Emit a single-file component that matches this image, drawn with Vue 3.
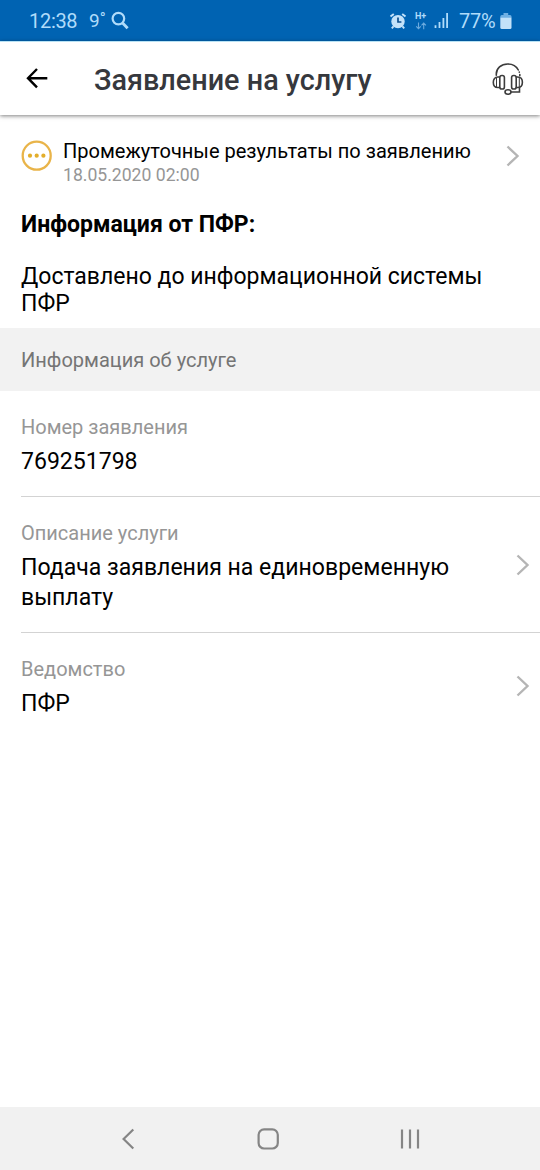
<script setup>
const details = [
  { label: 'Номер заявления', value: '769251798', kind: 'number', link: false },
  { label: 'Описание услуги', value: 'Подача заявления на единовременную выплату', kind: 'service', link: true },
  { label: 'Ведомство', value: 'ПФР', kind: 'agency', link: true },
]
</script>

<template>
  <div class="screen">
    <div class="status">
      <span class="clock">12:38</span>
      <span class="temp">9<span class="deg">°</span></span>
      <svg class="search" width="20" height="20" viewBox="0 0 20 20" fill="none" stroke="#b0dcfa">
        <circle cx="7.4" cy="7.600" r="5.800" stroke-width="2.200" />
        <path d="M11.600 12l5 5.300" stroke-width="2.800" />
      </svg>
      <div class="right">
        <svg width="18" height="18" viewBox="0 0 18 18">
          <circle cx="9" cy="9.600" r="6.700" fill="#c3e2f9" />
          <path d="M1.500 4.600L4.800 1.900M16.500 4.600l-3.300-2.700M4.500 14.300L2.800 16.300M13.500 14.300l1.700 2" stroke="#c3e2f9" stroke-width="1.900" fill="none" />
          <path d="M9 5.600V10h3.400" stroke="#0c4f8f" stroke-width="1.700" fill="none" />
        </svg>
        <div class="net">
          <span>H+</span>
          <svg width="12" height="8" viewBox="0 0 12 8" fill="none" stroke="#6aaade" stroke-width="1.100">
            <path d="M3.500 .5v6M1.200 4.400l2.300 2.300 2.300-2.300M8.700 7.200v-6M6.500 3.300l2.200-2.300 2.200 2.300" />
          </svg>
        </div>
        <svg class="signal" width="15" height="16" viewBox="0 0 15 16">
          <path d="M.6 12.300h1.800V15H.6zM4.600 9h1.800v6H4.600zM8.500 5h1.800v10H8.500zM12.200 0H14v15h-1.800z" fill="#b0dcfa" />
        </svg>
        <span class="percent">77%</span>
        <svg class="battery" width="12" height="17" viewBox="0 0 12 17">
          <path d="M3.500 0h4.700v2h1.800q1.500 0 1.500 1.500V5H.3V3.500Q.3 2 1.800 2h1.700z" fill="#6fb0e4" />
          <path d="M.3 4.800h11.200v9.700q0 1.500-1.500 1.500H1.800q-1.500 0-1.500-1.500z" fill="#c3e2f9" />
        </svg>
      </div>
    </div>

    <header class="header">
      <svg class="back" width="24" height="24" viewBox="0 0 24 24" fill="none" stroke="#000" stroke-width="2.400">
        <path d="M22.300 12.200H3.500M12 3L3 12.200l9 9.200" />
      </svg>
      <h1>Заявление на услугу</h1>
      <svg class="support" width="34" height="34" viewBox="0 0 34 34" fill="none" stroke="#3c3c3c" stroke-width="1.600" stroke-linecap="round">
        <path d="M5.300 13.200V12C5.300 6.500 10 2 16.800 2c5.200 0 8.700 2.300 10.500 6" />
        <path d="M28.300 10v.2M28.800 12.500v1.200" />
        <rect x="8.800" y="13.500" width="4.600" height="13.500" rx="2.100" />
        <rect x="20.600" y="13.500" width="4.600" height="13.500" rx="2.100" />
        <path d="M8.500 15H6.800C4 15 2.300 17 2.300 20.200S4 25.500 6.800 25.500H8.500M25.300 15h1.300c2.900 0 4.800 2 4.800 5.200S29.500 25.500 26.600 25.500h-1.300" />
        <path d="M5.500 15.700v9.500M28.300 15.700v9.500" stroke-width="1" />
        <path d="M28.500 25.800v4.200h-8.300" />
        <ellipse cx="17" cy="30" rx="3" ry="2.200" />
      </svg>
    </header>

    <main>
      <div class="result">
        <svg class="pending" width="32" height="32" viewBox="0 0 32 32">
          <circle cx="15.700" cy="15.700" r="14" fill="none" stroke="#e9b449" stroke-width="2.300" />
          <g fill="#e3ae2b"><circle cx="9" cy="15.700" r="2.100" /><circle cx="15.700" cy="15.700" r="2.100" /><circle cx="22.400" cy="15.700" r="2.100" /></g>
        </svg>
        <div class="result-text">
          <div class="result-title">Промежуточные результаты по заявлению</div>
          <div class="result-date">18.05.2020 02:00</div>
        </div>
        <svg class="chevron" width="14" height="22" viewBox="0 0 14 22" fill="none" stroke="#b5b5b5" stroke-width="2.400">
          <path d="M1.500 1.500L11.500 11l-10 9.500" />
        </svg>
      </div>
      <h2>Информация от ПФР:</h2>
      <p class="message">Доставлено до информационной системы ПФР</p>
      <div class="section">Информация об услуге</div>
      <div v-for="item in details" :key="item.label" class="detail" :class="item.kind">
        <div class="detail-text">
          <div class="label">{{ item.label }}</div>
          <div class="value">{{ item.value }}</div>
        </div>
        <svg v-if="item.link" class="chevron" width="14" height="22" viewBox="0 0 14 22" fill="none" stroke="#b5b5b5" stroke-width="2.400">
          <path d="M1.500 1.500L11.500 11l-10 9.500" />
        </svg>
      </div>
    </main>

    <nav class="nav">
      <svg width="14" height="22" viewBox="0 0 14 22" fill="none" stroke="#858585" stroke-width="2.200"><path d="M12.300 1.500L2.600 11l9.700 9.500" /></svg>
      <svg width="22" height="22" viewBox="0 0 22 22" fill="none" stroke="#858585" stroke-width="2.200"><rect x="1.600" y="1.300" width="19.200" height="19.200" rx="5.500" /></svg>
      <svg width="20" height="22" viewBox="0 0 20 22" fill="none" stroke="#858585" stroke-width="2.200"><path d="M2 1.500v19M10 1.500v19M18 1.500v19" /></svg>
    </nav>
  </div>
</template>

<style>
body { margin: 0; background: #fff; }
</style>

<style scoped>
.screen { width: 540px; height: 1170px; display: flex; flex-direction: column; background: #fff; font-family: Roboto, "Noto Sans", sans-serif; color: #000; overflow: hidden; }
.screen svg { flex: none; display: block; }
.status { height: 41px; box-sizing: border-box; flex: none; display: flex; align-items: center; padding: 2px 28px 0 29px; background: #0063b2; color: #b0dcfa; font-size: 20px; line-height: 24px; }
.clock { width: 60px; margin-top: -1px; letter-spacing: -0.3px; }
.temp { width: 22px; font-size: 19px; display: flex; line-height: 22px; margin-top: -2px; }
.deg { font-size: 16px; line-height: 18px; }
.search { margin-top: -1px; }
.right { margin-left: auto; display: flex; align-items: center; }
.right > svg { margin-top: -2px; }
.net { width: 13px; margin: -1px 6px 0 8px; font-size: 9px; line-height: 9px; font-weight: 700; }
.net svg { margin-top: 1px; }
.percent { margin: -1px 0 0 10px; width: 41px; letter-spacing: -0.3px; }
.right > .battery { margin-top: 0; }
.header { height: 74px; flex: none; box-sizing: border-box; display: flex; align-items: center; padding: 0 15px 0 25px; box-shadow: 0 1px 4px rgba(0,0,0,.5); border-top: 1px solid #b8e2f4; }
.back { margin-top: -1px; }
h1 { margin: 3px 0 0 45px; font-size: 28.8px; line-height: 34px; font-weight: 500; color: #36383d; white-space: nowrap; }
.support { margin-left: auto; }
main { flex: 1; display: flex; flex-direction: column; }
.result { display: flex; padding: 23px 20px 0 21px; }
.pending { margin-top: 2px; }
.result-text { margin-left: 10px; flex: 1; white-space: nowrap; }
.result-title { font-size: 20.05px; line-height: 26px; }
.result-date { font-size: 17.6px; line-height: 20px; color: #969696; margin-top: 1px; }
.result .chevron { margin-top: 7px; }
h2 { margin: 26px 21px 0; font-size: 23.05px; line-height: 27px; font-weight: 700; }
.message { margin: 25px 40px 0 21px; font-size: 23px; line-height: 27px; }
.section { margin-top: 11px; height: 63px; background: #f2f2f2; color: #757575; font-size: 20.05px; line-height: 65px; padding-left: 21px; }
.detail { margin-left: 21px; box-sizing: border-box; display: flex; justify-content: space-between; padding: 24px 10px 0 0; border-bottom: 1px solid #d3d3d3; }
.number { height: 106px; }
.service { height: 136px; }
.agency { border-bottom: 0; }
.label { font-size: 20px; line-height: 24px; color: #969696; }
.value { margin-top: 8px; font-size: 23.05px; line-height: 30px; width: 450px; }
.service .chevron { margin-top: 33px; }
.agency .chevron { margin-top: 18px; }
.nav { height: 63px; flex: none; display: flex; align-items: center; justify-content: space-between; padding: 0 120px 0 121px; background: #f1f1f1; }
</style>
